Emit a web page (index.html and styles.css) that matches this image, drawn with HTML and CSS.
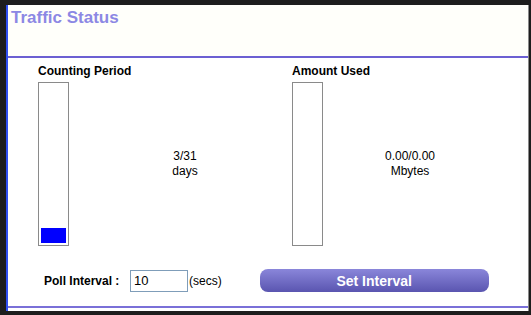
FILE: index.html
```html
<!DOCTYPE html>
<html lang="en">
<head>
  <meta charset="UTF-8" />
  <title>Traffic Status</title>
  <link rel="stylesheet" href="styles.css">
</head>
<body>
  <div class="frame">
    <div class="header">Traffic Status</div>

    <div class="content">
      <div class="usage">
        <div class="col col-period">
          <div class="caption">Counting Period</div>
          <div class="meter-row">
            <div class="meter"><div class="fill" style="height: 15px"></div></div>
            <div class="value value-period">3/31<br>days</div>
          </div>
        </div>
        <div class="col col-amount">
          <div class="caption">Amount Used</div>
          <div class="meter-row">
            <div class="meter"></div>
            <div class="value value-amount">0.00/0.00<br>Mbytes</div>
          </div>
        </div>
      </div>

      <div class="poll">
        <label for="poll_interval">Poll Interval :</label>
        <input id="poll_interval" type="text" value="10">
        <span class="unit">(secs)</span>
        <button type="button" class="btn">Set Interval</button>
      </div>
    </div>

    <div class="footer-rule"></div>
  </div>
</body>
</html>
```

FILE: styles.css
```css
html, body {
  margin: 0;
  height: 100%;
  background: #1d1d1d;
  overflow: hidden;
}
body {
  font-family: "Liberation Sans", Arial, sans-serif;
  font-size: 12px;
  color: #000;
}
.frame {
  margin: 5px 2px 0 6px;
  height: 306px;
  box-sizing: border-box;
  background: #fff;
  border-left: 2px solid #2f4ff0;
  border-right: 1px solid #8a8a8a;
  display: flex;
  flex-direction: column;
}
.header {
  height: 53px;
  box-sizing: border-box;
  padding: 3px 0 0 3px;
  background: #fffffa;
  border-bottom: 2px solid #6c60d2;
  color: #8c88e4;
  font-size: 17px;
  font-weight: bold;
}
.content {
  flex-grow: 1;
  padding: 6px 0 0 30px;
}
.usage {
  display: flex;
}
.col-period {
  width: 254px;
}
.col-amount {
  flex-grow: 1;
}
.caption {
  font-weight: bold;
  line-height: 14px;
  margin-bottom: 4px;
}
.meter-row {
  display: flex;
  align-items: center;
}
.meter {
  width: 31px;
  height: 164px;
  box-sizing: border-box;
  border: 1px solid #8a8a8a;
  display: flex;
  flex-direction: column;
  justify-content: flex-end;
  flex-shrink: 0;
}
.fill {
  margin: 0 2px 2px 2px;
  background: #0000ff;
}
.value {
  flex-grow: 1;
  text-align: center;
  line-height: 15px;
}
.value-period {
  padding-left: 9px;
}
.value-amount {
  padding-right: 31px;
}
.poll {
  display: flex;
  align-items: center;
  margin-top: 23px;
  padding-left: 6px;
  height: 23px;
}
.poll label {
  font-weight: bold;
  white-space: nowrap;
  flex-shrink: 0;
  width: 75px;
  margin-right: 11px;
}
.poll input {
  width: 58px;
  height: 22px;
  box-sizing: border-box;
  border: 1px solid #7f9db9;
  padding: 0 3px;
  font-family: inherit;
  font-size: 13px;
  margin: 0 1px 0 0;
  flex-shrink: 0;
}
.unit {
  margin-right: 38px;
}
.btn {
  width: 229px;
  height: 23px;
  flex-shrink: 0;
  border: none;
  border-radius: 8px;
  background: linear-gradient(#8a86da, #5a55b0);
  color: #fff;
  font-family: inherit;
  font-size: 14px;
  font-weight: bold;
  padding: 0;
}
.footer-rule {
  height: 2px;
  background: #7a70d8;
  margin-bottom: 3px;
}
```
